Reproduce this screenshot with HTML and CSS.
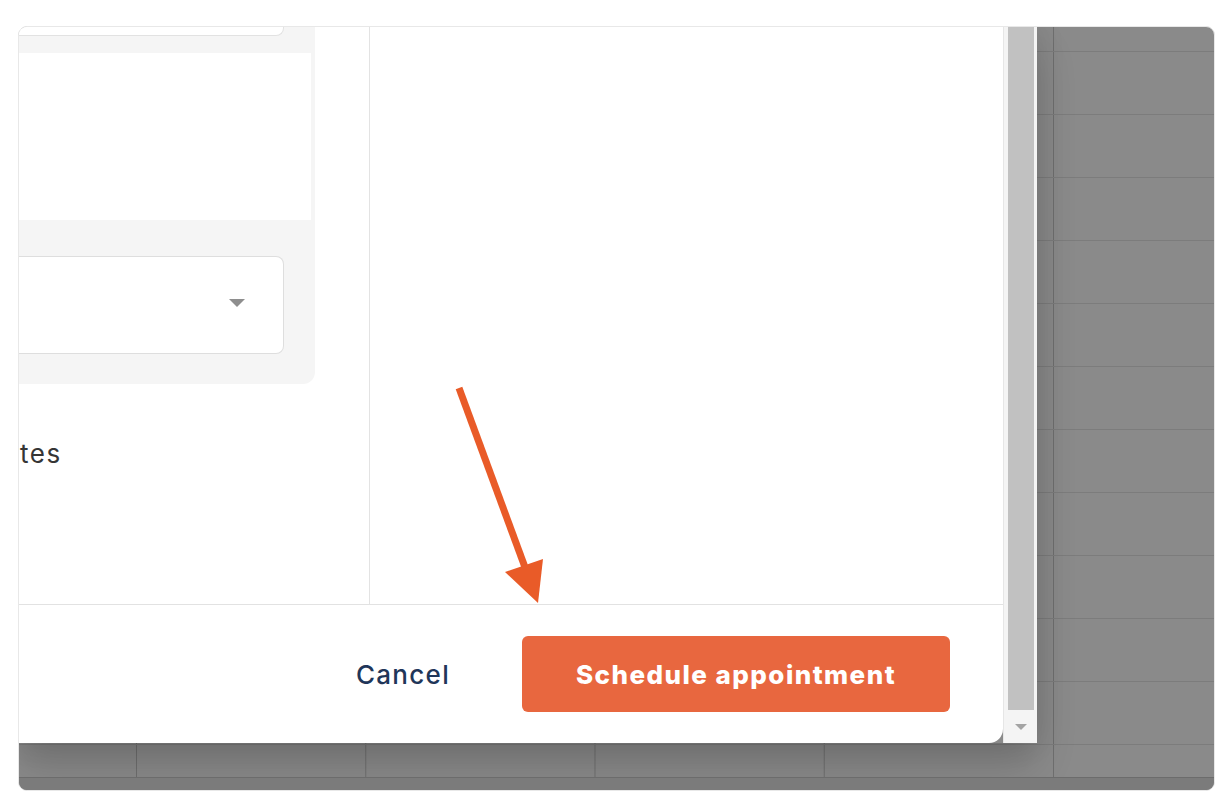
FILE: index.html
```html
<!DOCTYPE html>
<html lang="en">
<head>
<meta charset="utf-8">
<title>Schedule appointment</title>
<link rel="stylesheet" href="styles.css">
</head>
<body>
<div class="frame">
  <div class="top">
    <div class="dialog">
      <div class="modal">
        <div class="modal-body">
          <div class="left-col">
            <div class="card">
              <div class="input-top"></div>
              <div class="white-area"></div>
              <div class="select"><span class="caret"></span></div>
            </div>
            <div class="notes">tes</div>
          </div>
          <div class="right-col"></div>
        </div>
        <div class="footer">
          <button class="btn-cancel" type="button">Cancel</button>
          <button class="btn-primary" type="button">Schedule appointment</button>
        </div>
      </div>
      <div class="scrollbar">
        <div class="thumb"></div>
        <div class="scroll-arrow"><span class="scroll-caret"></span></div>
      </div>
    </div>
  </div>
  <div class="spacer"></div>
  <div class="sheet-bar"></div>
</div>
<svg class="annotation" width="1232" height="808" viewBox="0 0 1232 808" aria-hidden="true">
  <line x1="459" y1="388" x2="526" y2="570" stroke="#e95b28" stroke-width="7" stroke-linecap="butt"/>
  <polygon points="505,572 543,559 538,603" fill="#e95b28"/>
</svg>
</body>
</html>
```

FILE: styles.css
```css
html, body {
  margin: 0;
  padding: 0;
}

body {
  background: #ffffff;
  width: 1232px;
  height: 808px;
  overflow: hidden;
  font-family: "Inter", "Noto Sans", "Liberation Sans", sans-serif;
}

.frame {
  margin: 26px 0 0 18px;
  width: 1197px;
  height: 765px;
  box-sizing: border-box;
  border: 1px solid #e8e8e8;
  border-radius: 9px;
  overflow: hidden;
  display: flex;
  flex-direction: column;
  background-color: #8a8a8a;
  background-image:
    linear-gradient(to bottom, #7c7c7c 0, #7c7c7c 1px, transparent 1px),
    linear-gradient(to right, #6f6f6f 0, #6f6f6f 1px, transparent 1px);
  background-size: 100% 63px, 229.25px 100%;
  background-position: 0 24px, 117px 0;
}

.top {
  display: flex;
  height: 716px;
  flex: none;
}

.dialog {
  display: flex;
  box-shadow: 0 24px 40px rgba(0, 0, 0, 0.16), 0 0 30px rgba(0, 0, 0, 0.1);
  border-bottom-right-radius: 14px;
}

.modal {
  width: 984px;
  background: #ffffff;
  border-bottom-right-radius: 14px;
  display: flex;
  flex-direction: column;
}

.modal-body {
  height: 577px;
  display: flex;
}

.left-col {
  width: 350px;
  border-right: 1px solid #e3e3e3;
}

.card {
  width: 296px;
  height: 357px;
  box-sizing: border-box;
  background: #f5f5f5;
  border-bottom-right-radius: 12px;
  padding-right: 31px;
}

.input-top {
  height: 8px;
  background: #ffffff;
  border: 1px solid #e2e2e2;
  border-top: none;
  border-left: none;
  border-bottom-right-radius: 8px;
}

.white-area {
  margin-top: 17px;
  height: 167px;
  margin-right: -27px;
  background: #ffffff;
}

.select {
  margin-top: 36px;
  height: 98px;
  box-sizing: border-box;
  background: #ffffff;
  border: 1px solid #dedede;
  border-left: none;
  border-radius: 0 8px 8px 0;
  display: flex;
  align-items: center;
  justify-content: flex-end;
  padding-right: 38px;
  padding-bottom: 4px;
}

.caret {
  width: 0;
  height: 0;
  border-left: 8.5px solid transparent;
  border-right: 8.5px solid transparent;
  border-top: 8px solid #8e8e8e;
}

.notes {
  margin-top: 55px;
  font-size: 26px;
  line-height: 30px;
  letter-spacing: 1.5px;
  color: #353535;
  padding-left: 1px;
}

.right-col {
  flex: 1;
}

.footer {
  flex: 1;
  border-top: 1px solid #e2e2e2;
  display: flex;
  align-items: center;
  justify-content: flex-end;
  padding-right: 53px;
}

.btn-cancel {
  background: none;
  border: none;
  padding: 0;
  margin: 0 72px 0 0;
  font-family: inherit;
  font-size: 26px;
  font-weight: 500;
  letter-spacing: 1.3px;
  color: #1f3659;
}

.btn-primary {
  width: 428px;
  height: 76px;
  border: none;
  border-radius: 6px;
  background: #e8673f;
  color: #ffffff;
  font-family: inherit;
  font-size: 26px;
  font-weight: 800;
  letter-spacing: 1.45px;
  padding: 0;
}

.scrollbar {
  width: 34px;
  box-sizing: border-box;
  background: #f4f4f4;
  border-left: 1px solid #e6e6e6;
  padding: 0 3px 0 4px;
  display: flex;
  flex-direction: column;
}

.thumb {
  flex: 1;
  background: #c1c1c1;
}

.scroll-arrow {
  height: 33px;
  display: flex;
  align-items: center;
  justify-content: center;
}

.scroll-caret {
  width: 0;
  height: 0;
  border-left: 6px solid transparent;
  border-right: 6px solid transparent;
  border-top: 6px solid #a3a3a3;
}

.spacer {
  flex: 1;
}

.sheet-bar {
  height: 12px;
  flex: none;
  background: #7b7b7b;
  border-top: 1px solid #6c6c6c;
}

.annotation {
  position: absolute;
  left: 0;
  top: 0;
  pointer-events: none;
}
```
